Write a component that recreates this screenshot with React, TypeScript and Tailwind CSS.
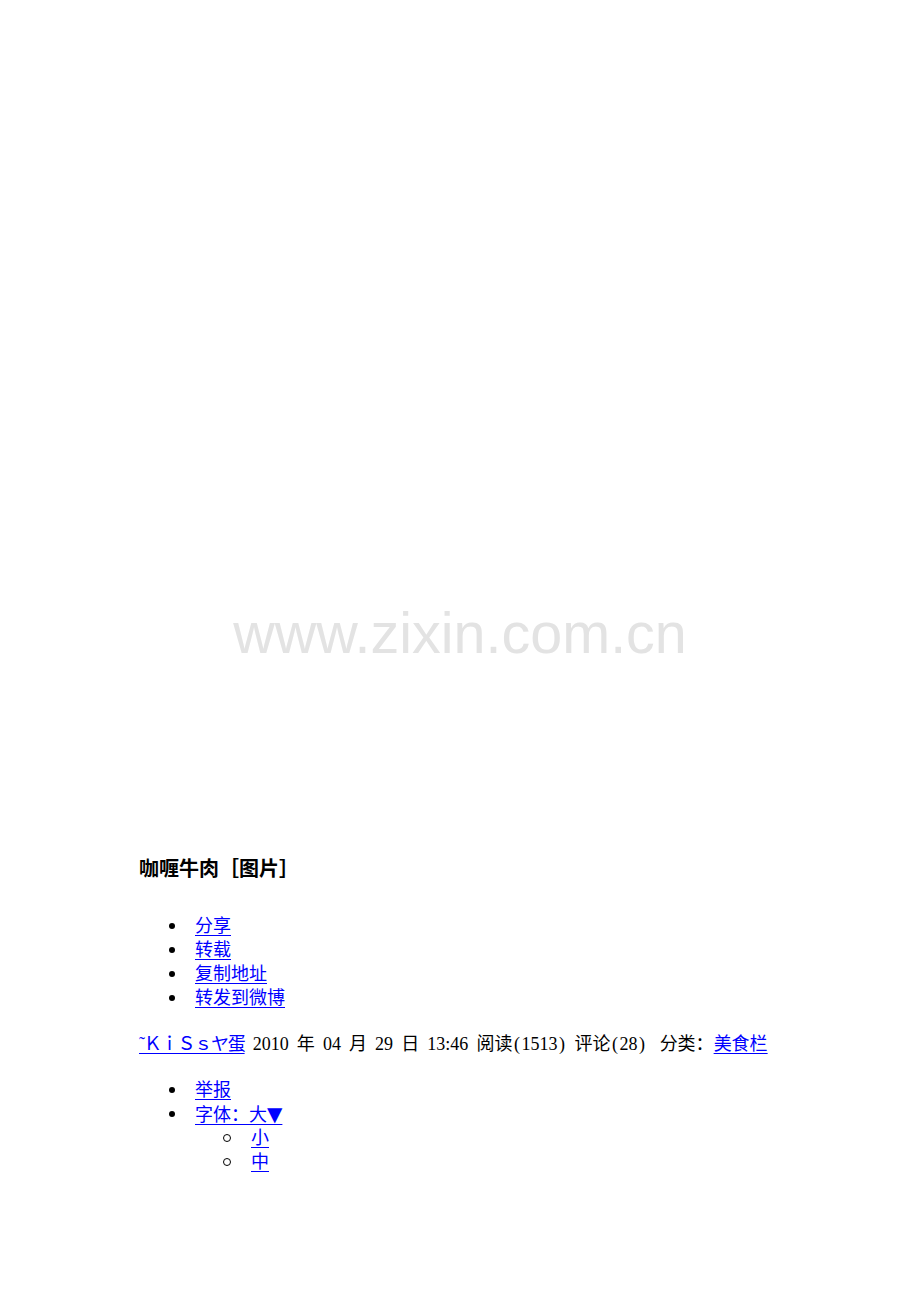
import React from "react";

const font = { fontFamily: '"Liberation Serif", "Noto Sans CJK SC", serif' };

function Dot() {
  return <span className="ml-[30px] mr-[20px] inline-block h-[6px] w-[6px] shrink-0 rounded-full bg-black" />;
}
function Ring() {
  return <span className="ml-[84px] mr-[20px] inline-block h-[8px] w-[8px] shrink-0 rounded-full border border-black" />;
}

function A({ children, className = "" }: { children: React.ReactNode; className?: string }) {
  return <a href="#" className={"text-[#0000ff] underline underline-offset-[3px] " + className}>{children}</a>;
}

function Paren({ children }: { children: React.ReactNode }) {
  return (
    <>
      <span className="ml-[1.5px] mr-[1.5px]">(</span>
      {children}
      <span className="ml-[1.5px] mr-[1.5px]">)</span>
    </>
  );
}

export default function App() {
  return (
    <div className="relative min-h-[1302px] w-[920px] bg-white text-black" style={font}>
      <div className="pointer-events-none absolute left-0 right-0 top-[598px] text-center text-[57.5px] leading-[70px] text-[#e3e3e3] [font-family:'Liberation_Sans',sans-serif]">
        www.zixin.com.cn
      </div>
      <div className="pl-[139px] pt-[856px] text-[18px] leading-[24px]">
        <h1 className="text-[20px] font-bold leading-[24px] [font-family:'Noto_Sans_CJK_SC',sans-serif]">咖喱牛肉［图片］</h1>
        <ul className="mt-[34px]">
          {["分享", "转载", "复制地址", "转发到微博"].map((t) => (
            <li key={t} className="flex h-6 items-center">
              <Dot />
              <A>{t}</A>
            </li>
          ))}
        </ul>
        <div className="mt-[22px] h-6 whitespace-nowrap [word-spacing:3.6px]">
          <A className="tracking-[-1.2px]">˜ＫｉＳｓヤ蛋</A> 2010 年 04 月 29 日 13:46 阅读<Paren>1513</Paren> 评论<Paren>28</Paren><span className="ml-[5px]"> </span>分类：<A>美食栏</A>
        </div>
        <ul className="mt-[22px]">
          <li className="flex h-6 items-center">
            <Dot />
            <A>举报</A>
          </li>
          <li className="flex h-6 items-center">
            <Dot />
            <A>
              字体：大<span className="text-[20px] [font-family:'DejaVu_Sans',sans-serif]">▼</span>
            </A>
          </li>
          {["小", "中"].map((t) => (
            <li key={t} className="flex h-6 items-center">
              <Ring />
              <A>{t}</A>
            </li>
          ))}
        </ul>
      </div>
    </div>
  );
}
